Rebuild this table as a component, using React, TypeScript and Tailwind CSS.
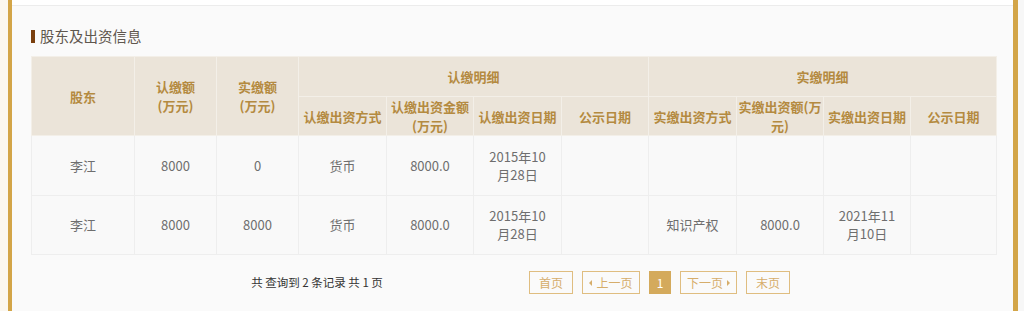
import React from "react";

const cols = [103, 82, 82, 88, 87, 88, 87, 88, 87, 87, 86];

const rows = [
  ["李江", "8000", "0", "货币", "8000.0", "2015年10\n月28日", "", "", "", "", ""],
  ["李江", "8000", "8000", "货币", "8000.0", "2015年10\n月28日", "", "知识产权", "8000.0", "2021年11\n月10日", ""],
];

const th = "border border-[#f3efe8] bg-[#ebe4d9] text-[#b48a40] font-bold text-[13px] leading-[19px] text-center align-middle px-1";
const td = "border border-[#eeeeee] bg-[#f9f9f9] text-[#6e6e6e] text-[13px] leading-[18px] text-center align-middle px-1 whitespace-pre-line";

function PageBtn({ children, active, className = "" }: { children: React.ReactNode; active?: boolean; className?: string }) {
  return (
    <div
      className={`flex h-[23px] items-center justify-center border text-[12px] ${
        active ? "border-[#d4aa5c] bg-[#d4aa5c] text-white" : "border-[#dfbd80] text-[#d6ad6b]"
      } ${className}`}
    >
      {children}
    </div>
  );
}

export default function App() {
  return (
    <div className="flex h-[311px] w-[1024px] bg-white" style={{ fontFamily: '"Noto Sans CJK SC", "Noto Sans", sans-serif' }}>
      <div className="w-[8px] bg-[#fbf7ef]" />
      <div className="w-[4px] bg-[#d3a548]" />
      <main className="flex w-[1001px] flex-col bg-[#fafafa]">
        <div className="h-[6px] border-b border-[#ececec] bg-white" />
        <div className="flex flex-col px-[19px] pt-[22px]">
          <div className="flex items-center gap-[5px]">
            <div className="h-[13px] w-[4px] bg-[#7a3f0e]" />
            <h2 className="text-[14.5px] leading-[16px] text-[#5f574e]">股东及出资信息</h2>
          </div>
          <table className="mt-[12px] border-collapse table-fixed" style={{ width: 964 }}>
            <colgroup>
              {cols.map((w, i) => (
                <col key={i} style={{ width: w }} />
              ))}
            </colgroup>
            <thead>
              <tr className="h-[40px]">
                <th rowSpan={2} className={th}>股东</th>
                <th rowSpan={2} className={th}>认缴额<br />(万元)</th>
                <th rowSpan={2} className={th}>实缴额<br />(万元)</th>
                <th colSpan={4} className={th}>认缴明细</th>
                <th colSpan={4} className={th}>实缴明细</th>
              </tr>
              <tr className="h-[39px]">
                <th className={th}>认缴出资方式</th>
                <th className={th}>认缴出资金额<br />(万元)</th>
                <th className={th}>认缴出资日期</th>
                <th className={th}>公示日期</th>
                <th className={th}>实缴出资方式</th>
                <th className={`${th} !px-0 whitespace-nowrap`}>实缴出资额(万<br />元)</th>
                <th className={th}>实缴出资日期</th>
                <th className={th}>公示日期</th>
              </tr>
            </thead>
            <tbody>
              {rows.map((r, i) => (
                <tr key={i} className={i === 0 ? "h-[60px]" : "h-[59px]"}>
                  {r.map((c, j) => (
                    <td key={j} className={td}>{c}</td>
                  ))}
                </tr>
              ))}
            </tbody>
          </table>
          <div className="mt-[16px] flex items-center">
            <div className="w-[498px] pl-[74px] text-center text-[11.5px] text-[#333]">共 查询到 2 条记录 共 1 页</div>
            <div className="flex gap-[9px]">
              <PageBtn className="w-[44px]">首页</PageBtn>
              <PageBtn className="w-[58px]">
                <span className="mr-[4px] h-0 w-0 border-y-[3px] border-r-[3px] border-y-transparent border-r-[#d6ad6b]" />上一页
              </PageBtn>
              <PageBtn active className="w-[22px]">1</PageBtn>
              <PageBtn className="w-[57px]">
                下一页<span className="ml-[4px] h-0 w-0 border-y-[3px] border-l-[3px] border-y-transparent border-l-[#d6ad6b]" />
              </PageBtn>
              <PageBtn className="w-[44px]">末页</PageBtn>
            </div>
          </div>
        </div>
      </main>
      <div className="w-[5px] bg-[#d3a548]" />
      <div className="w-[6px] bg-[#f7f7f7]" />
    </div>
  );
}
